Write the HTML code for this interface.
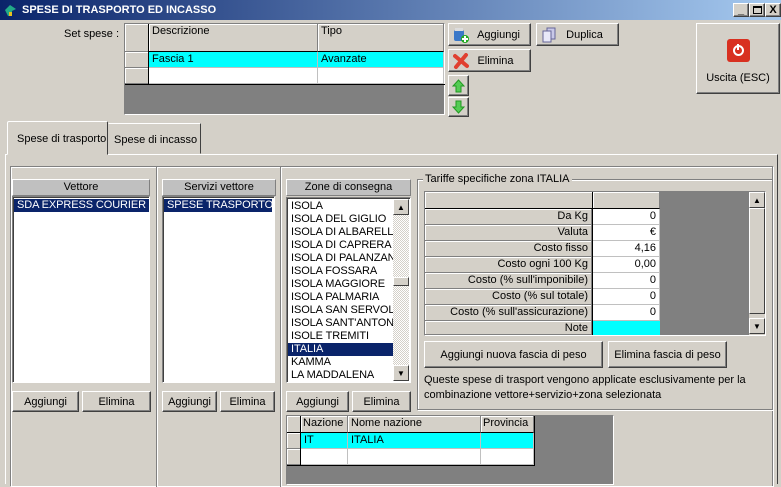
<!DOCTYPE html><html><head><style>
*{box-sizing:border-box;margin:0;padding:0}
body{width:781px;height:481px;background:#d4d0c8;font-family:"Liberation Sans",sans-serif;font-size:11px;color:#000;position:relative;overflow:hidden}
.a{position:absolute;white-space:nowrap}
.btn{position:absolute;background:#d4d0c8;border:1px solid;border-color:#fff #404040 #404040 #fff;box-shadow:inset -1px -1px 0 #808080;display:flex;align-items:center;justify-content:center;font-size:11px;white-space:nowrap}
.hdr{position:absolute;background:#c0c0c0;border:1px solid;border-color:#fff #808080 #808080 #fff;text-align:center;font-size:11px;line-height:15px;white-space:nowrap}
.list{position:absolute;background:#fff;border:1px solid;border-color:#808080 #fff #fff #808080;box-shadow:inset 1px 1px 0 #404040;font-size:11px;letter-spacing:-0.1px;overflow:hidden}
.sel{background:#0a246a;color:#fff}
.row{height:13px;line-height:13px;padding-left:3px;white-space:nowrap;overflow:hidden}
.cell{position:absolute;border-right:1px solid #c0c0c0;border-bottom:1px solid #c0c0c0;font-size:11px;line-height:15px;padding:0 3px;white-space:nowrap;overflow:hidden}
.gh{background:#d4d0c8;border-right:1px solid #808080;border-bottom:1px solid #808080;box-shadow:inset 1px 1px 0 #fff}
.etch{position:absolute;border:1px solid #808080;box-shadow:1px 1px 0 #fff, inset 1px 1px 0 #fff}
.sb{position:absolute;background:#d4d0c8;border:1px solid;border-color:#fff #404040 #404040 #fff;font-size:8px;display:flex;align-items:center;justify-content:center}
</style></head><body>
<div class="a" style="left:0;top:0;width:781px;height:20px;background:linear-gradient(90deg,#0a246a,#a6caf0)"></div>
<div class="a" style="left:4px;top:3px;width:13px;height:14px;"><svg width="13" height="14"><path d="M1 7 L6 2 L12 6 L8 8 L8 13 L4 13 Z" fill="#2a8"/><rect x="5" y="9" width="3" height="4" fill="#e8c020"/></svg></div>
<div class="a" style="left:22px;top:4px;color:#fff;font-weight:bold;font-size:11px">SPESE DI TRASPORTO ED INCASSO</div>
<div class="btn" style="left:733px;top:3px;width:16px;height:14px;font-size:11px;font-weight:bold;align-items:flex-end">_</div>
<div class="btn" style="left:749px;top:3px;width:16px;height:14px"><div style="width:9px;height:8px;border:1px solid #000;border-top-width:2px"></div></div>
<div class="btn" style="left:765px;top:3px;width:16px;height:14px;font-weight:bold">X</div>

<div class="a" style="left:64px;top:28px;font-size:11px">Set spese :</div>
<div class="a" style="left:124px;top:23px;width:321px;height:92px;background:#808080;border:1px solid;border-color:#808080 #fff #fff #808080"></div>
<div class="cell gh" style="left:125px;top:24px;width:24px;height:28px"></div>
<div class="cell gh" style="left:149px;top:24px;width:169px;height:28px;border-bottom:1px solid #000">Descrizione</div>
<div class="cell gh" style="left:318px;top:24px;width:126px;height:28px;border-bottom:1px solid #000">Tipo</div>
<div class="cell gh" style="left:125px;top:52px;width:24px;height:16px"></div>
<div class="cell gh" style="left:125px;top:68px;width:24px;height:16px"></div>
<div class="a" style="left:148px;top:24px;width:1px;height:60px;background:#000"></div>
<div class="cell" style="left:149px;top:52px;width:169px;height:16px;background:#0ff">Fascia 1</div>
<div class="cell" style="left:318px;top:52px;width:126px;height:16px;background:#0ff">Avanzate</div>
<div class="cell" style="left:149px;top:68px;width:169px;height:16px;background:#fff"></div>
<div class="cell" style="left:318px;top:68px;width:126px;height:16px;background:#fff"></div>
<div class="a" style="left:125px;top:84px;width:320px;height:1px;background:#000"></div>

<div class="btn" style="left:448px;top:23px;width:83px;height:23px;padding-left:18px"><svg class="a" style="left:4px;top:3px" width="16" height="16"><rect x="1" y="3" width="10" height="11" rx="2" fill="#3a78c8"/><rect x="2" y="1" width="8" height="3" fill="#ddd"/><circle cx="12" cy="12" r="4" fill="#2a2"/><path d="M12 9v6M9 12h6" stroke="#fff" stroke-width="2"/></svg>Aggiungi</div>
<div class="btn" style="left:536px;top:23px;width:83px;height:23px;padding-left:14px"><svg class="a" style="left:4px;top:3px" width="16" height="16"><rect x="6" y="1" width="8" height="11" fill="#c8c8e8" stroke="#669"/><rect x="2" y="4" width="8" height="11" fill="#e8e8f8" stroke="#669"/></svg>Duplica</div>
<div class="btn" style="left:448px;top:49px;width:83px;height:23px;padding-left:12px"><svg class="a" style="left:4px;top:3px" width="16" height="16"><path d="M2 3L14 13M13 2L3 14" stroke="#e04030" stroke-width="4" stroke-linecap="round"/></svg>Elimina</div>
<div class="btn" style="left:448px;top:75px;width:21px;height:21px"><svg width="13" height="14"><path d="M6.5 1L12 7H9V13H4V7H1Z" fill="#5c5" stroke="#292"/></svg></div>
<div class="btn" style="left:448px;top:97px;width:21px;height:20px"><svg width="13" height="14"><path d="M6.5 13L12 7H9V1H4V7H1Z" fill="#5c5" stroke="#292"/></svg></div>
<div class="btn" style="left:696px;top:23px;width:84px;height:71px;flex-direction:column;justify-content:flex-start">
<div style="margin-top:15px;width:23px;height:23px;background:#d83020;border-radius:3px;display:flex;align-items:center;justify-content:center"><div style="width:11px;height:11px;border:2px solid #fff;border-radius:50%;position:relative"><div style="position:absolute;left:2px;top:-3px;width:2px;height:6px;background:#fff"></div></div></div>
<div style="margin-top:10px">Uscita (ESC)</div></div>

<div class="a" style="left:5px;top:154px;width:773px;height:330px;border-top:1px solid #fff;border-left:1px solid #fff;border-right:1px solid #404040"></div>
<div class="a" style="left:7px;top:121px;width:101px;height:34px;background:#d4d0c8;border:1px solid;border-color:#fff #404040 transparent #fff;border-radius:2px 2px 0 0;font-size:11px;padding:11px 0 0 9px">Spese di trasporto</div>
<div class="a" style="left:108px;top:123px;width:93px;height:31px;border:1px solid;border-color:#fff #404040 transparent transparent;font-size:11px;padding:10px 0 0 5px">Spese di incasso</div>
<div class="etch" style="left:10px;top:166px;width:763px;height:320px;border-bottom:none"></div>
<div class="a" style="left:157px;top:167px;width:1px;height:320px;background:#fff;box-shadow:-1px 0 0 #808080"></div>
<div class="a" style="left:281px;top:167px;width:1px;height:320px;background:#fff;box-shadow:-1px 0 0 #808080"></div>

<div class="hdr" style="left:12px;top:179px;width:138px;height:17px">Vettore</div>
<div class="list" style="left:12px;top:196px;width:138px;height:187px;padding:2px 0 0 1px"><div class="row sel">SDA EXPRESS COURIER S</div></div>
<div class="btn" style="left:12px;top:391px;width:67px;height:21px">Aggiungi</div>
<div class="btn" style="left:82px;top:391px;width:69px;height:21px">Elimina</div>
<div class="hdr" style="left:162px;top:179px;width:114px;height:17px">Servizi vettore</div>
<div class="list" style="left:162px;top:196px;width:113px;height:187px;padding:2px 0 0 1px"><div class="row sel" style="width:108px">SPESE TRASPORTO</div></div>
<div class="btn" style="left:162px;top:391px;width:55px;height:21px">Aggiungi</div>
<div class="btn" style="left:220px;top:391px;width:55px;height:21px">Elimina</div>
<div class="hdr" style="left:286px;top:179px;width:125px;height:17px">Zone di consegna</div>
<div class="list" style="left:286px;top:197px;width:125px;height:186px;padding:2px 0 0 1px">
<div class="row">ISOLA</div><div class="row">ISOLA DEL GIGLIO</div><div class="row">ISOLA DI ALBARELL</div><div class="row">ISOLA DI CAPRERA</div><div class="row">ISOLA DI PALANZAN</div><div class="row">ISOLA FOSSARA</div><div class="row">ISOLA MAGGIORE</div><div class="row">ISOLA PALMARIA</div><div class="row">ISOLA SAN SERVOL</div><div class="row">ISOLA SANT'ANTON</div><div class="row">ISOLE TREMITI</div><div class="row sel" style="width:105px">ITALIA</div><div class="row">KAMMA</div><div class="row">LA MADDALENA</div></div>
<div class="a" style="left:393px;top:199px;width:16px;height:182px;background:repeating-conic-gradient(#fff 0 25%,#d4d0c8 0 50%) 0 0/2px 2px"></div>
<div class="sb" style="left:393px;top:199px;width:16px;height:16px">▲</div>
<div class="sb" style="left:393px;top:277px;width:16px;height:9px"></div>
<div class="sb" style="left:393px;top:365px;width:16px;height:16px">▼</div>
<div class="btn" style="left:286px;top:391px;width:63px;height:21px">Aggiungi</div>
<div class="btn" style="left:352px;top:391px;width:59px;height:21px">Elimina</div>

<div class="etch" style="left:417px;top:179px;width:356px;height:231px"></div>
<div class="a" style="left:423px;top:173px;background:#d4d0c8;padding:0 2px;font-size:11px">Tariffe specifiche zona ITALIA</div>
<div class="a" style="left:424px;top:191px;width:342px;height:145px;background:#808080;border:1px solid;border-color:#808080 #fff #fff #808080"></div>
<div class="cell gh" style="left:425px;top:192px;width:168px;height:17px;border-bottom:1px solid #000"></div>
<div class="cell gh" style="left:593px;top:192px;width:67px;height:17px;border-bottom:1px solid #000"></div>
<div class="a" style="left:592px;top:192px;width:1px;height:143px;background:#000"></div>
<div class="cell gh" style="left:425px;top:209px;width:167px;height:16px;text-align:right">Da Kg</div>
<div class="cell gh" style="left:425px;top:225px;width:167px;height:16px;text-align:right">Valuta</div>
<div class="cell gh" style="left:425px;top:241px;width:167px;height:16px;text-align:right">Costo fisso</div>
<div class="cell gh" style="left:425px;top:257px;width:167px;height:16px;text-align:right">Costo ogni 100 Kg</div>
<div class="cell gh" style="left:425px;top:273px;width:167px;height:16px;text-align:right">Costo (% sull'imponibile)</div>
<div class="cell gh" style="left:425px;top:289px;width:167px;height:16px;text-align:right">Costo (% sul totale)</div>
<div class="cell gh" style="left:425px;top:305px;width:167px;height:16px;text-align:right">Costo (% sull'assicurazione)</div>
<div class="cell gh" style="left:425px;top:321px;width:167px;height:14px;text-align:right">Note</div>
<div class="cell" style="left:593px;top:209px;width:67px;height:16px;background:#fff;text-align:right">0</div>
<div class="cell" style="left:593px;top:225px;width:67px;height:16px;background:#fff;text-align:right">€</div>
<div class="cell" style="left:593px;top:241px;width:67px;height:16px;background:#fff;text-align:right">4,16</div>
<div class="cell" style="left:593px;top:257px;width:67px;height:16px;background:#fff;text-align:right">0,00</div>
<div class="cell" style="left:593px;top:273px;width:67px;height:16px;background:#fff;text-align:right">0</div>
<div class="cell" style="left:593px;top:289px;width:67px;height:16px;background:#fff;text-align:right">0</div>
<div class="cell" style="left:593px;top:305px;width:67px;height:16px;background:#fff;text-align:right">0</div>
<div class="cell" style="left:593px;top:321px;width:67px;height:14px;background:#0ff;border:none"></div>
<div class="a" style="left:749px;top:192px;width:16px;height:143px;background:#d4d0c8"></div>
<div class="sb" style="left:749px;top:192px;width:16px;height:16px">▲</div>
<div class="sb" style="left:749px;top:208px;width:16px;height:106px"></div>
<div class="sb" style="left:749px;top:318px;width:16px;height:16px">▼</div>
<div class="btn" style="left:424px;top:341px;width:179px;height:27px">Aggiungi nuova fascia di peso</div>
<div class="btn" style="left:608px;top:341px;width:119px;height:27px">Elimina fascia di peso</div>
<div class="a" style="left:424px;top:373px;font-size:11px;line-height:15px;width:345px;white-space:normal">Queste spese di trasport vengono applicate esclusivamente per la combinazione vettore+servizio+zona selezionata</div>

<div class="a" style="left:286px;top:415px;width:328px;height:70px;background:#808080;border:1px solid;border-color:#808080 #fff #fff #808080"></div>
<div class="cell gh" style="left:287px;top:416px;width:14px;height:17px;border-bottom:1px solid #000"></div>
<div class="cell gh" style="left:301px;top:416px;width:47px;height:17px;border-bottom:1px solid #000;padding:0 2px">Nazione</div>
<div class="cell gh" style="left:348px;top:416px;width:133px;height:17px;border-bottom:1px solid #000">Nome nazione</div>
<div class="cell gh" style="left:481px;top:416px;width:53px;height:17px;border-bottom:1px solid #000;padding:0 2px">Provincia</div>
<div class="cell gh" style="left:287px;top:433px;width:14px;height:16px"></div>
<div class="cell gh" style="left:287px;top:449px;width:14px;height:16px"></div>
<div class="a" style="left:300px;top:416px;width:1px;height:49px;background:#000"></div>
<div class="cell" style="left:301px;top:433px;width:47px;height:16px;background:#0ff">IT</div>
<div class="cell" style="left:348px;top:433px;width:133px;height:16px;background:#0ff">ITALIA</div>
<div class="cell" style="left:481px;top:433px;width:53px;height:16px;background:#0ff"></div>
<div class="cell" style="left:301px;top:449px;width:47px;height:16px;background:#fff"></div>
<div class="cell" style="left:348px;top:449px;width:133px;height:16px;background:#fff"></div>
<div class="cell" style="left:481px;top:449px;width:53px;height:16px;background:#fff"></div>
<div class="a" style="left:287px;top:465px;width:248px;height:1px;background:#000"></div>
<div class="a" style="left:534px;top:416px;width:1px;height:50px;background:#000"></div>
</body></html>
